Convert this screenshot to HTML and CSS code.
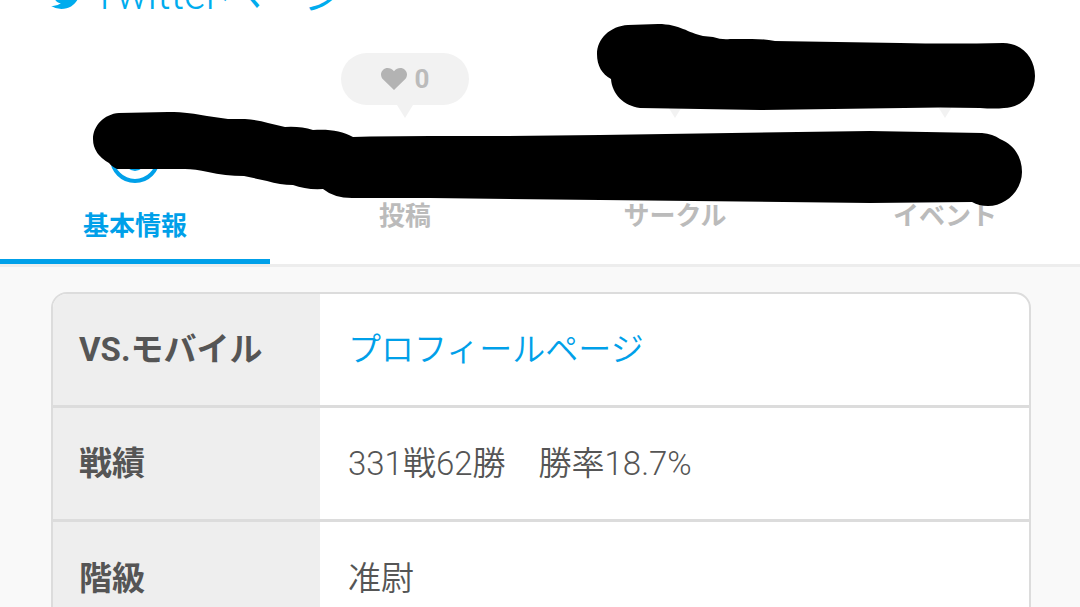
FILE: index.html
```html
<!DOCTYPE html>
<html lang="ja">
<head>
    <meta charset="UTF-8">
    <meta name="viewport" content="width=device-width, initial-scale=1.0">
    <title>プロフィール</title>
    <link rel="stylesheet" href="styles.css">
</head>
<body>
    <header class="header">
        <a href="#" class="twitter-link">
            <svg class="twitter-icon" viewBox="0 0 24 24" aria-hidden="true">
                <path d="M23.6 4.9c-.9.4-1.8.6-2.8.8 1-.6 1.8-1.6 2.1-2.7-.9.6-2 1-3.1 1.2a4.8 4.8 0 0 0-8.300 4.400C7.700 8.400 4.100 6.500 1.700 3.500a4.800 4.800 0 0 0 1.500 6.500c-.8 0-1.500-.2-2.200-.6v.1c0 2.300 1.700 4.300 3.900 4.700-.7.2-1.500.2-2.200.1.600 1.900 2.400 3.300 4.500 3.400A9.700 9.700 0 0 1 .1 19.600a13.700 13.700 0 0 0 7.400 2.200c8.900 0 13.700-7.400 13.700-13.800v-.6c1-.7 1.800-1.500 2.400-2.500z"/>
            </svg>
            <span><span class="latin">Twitter</span>ページ</span>
        </a>
    </header>

    <nav class="tabs">
        <a href="#" class="tab active">
            <svg class="tab-icon" viewBox="0 0 50 50" aria-hidden="true">
                <circle cx="25" cy="25" r="23"/>
                <circle class="fill" cx="25" cy="28" r="10"/>
            </svg>
            <span class="tab-label">基本情報</span>
        </a>
        <a href="#" class="tab">
            <span class="bubble">
                <svg class="heart" viewBox="0 0 26 22" aria-hidden="true">
                    <path d="M13 22L2.200 11.600C-.7 8.700-.7 4.300 2 1.900 4.900-.7 9.700-.6 13 3.200 16.300-.6 21.100-.7 24 1.900c2.700 2.400 2.700 6.800-.2 9.700z"/>
                </svg>
                <span>0</span>
            </span>
            <span class="tab-label">投稿</span>
        </a>
        <a href="#" class="tab">
            <span class="bubble"></span>
            <span class="tab-label">サークル</span>
        </a>
        <a href="#" class="tab">
            <span class="bubble"></span>
            <span class="tab-label">イベント</span>
        </a>
    </nav>

    <main class="content">
        <div class="info-box">
            <table class="info-table">
                <tr>
                    <th scope="row">VS.モバイル</th>
                    <td><a href="#">プロフィールページ</a></td>
                </tr>
                <tr>
                    <th scope="row">戦績</th>
                    <td><span class="latin">331</span>戦<span class="latin">62</span>勝　勝率<span class="latin">18.7%</span></td>
                </tr>
                <tr>
                    <th scope="row">階級</th>
                    <td>准尉</td>
                </tr>
            </table>
        </div>
    </main>

    <!-- hand-drawn marker strokes -->
    <svg class="marker" viewBox="0 0 1080 220" aria-hidden="true">
        <path d="M628 25L658 24C680 24 688 33 703 36L713 37Q722 40 730 39L752 39Q765 39 775 41L900 43Q950 44 1003 43C1022 43 1035 58 1035 76C1035 94 1021 108 1004 108Q995 109 980 108L940 107.500L760 110L640 108C624 106 612 94 611 79C602 74 597 66 597 54C597 39 610 26 628 25z"/>
        <path d="M119 113L168 112C185 112 195 114 207 116L228 119L245 119Q258 120 268 123L285 127Q300 126 313 130C330 129 342 131 353 137L370 136.500L430 136L500 136L600 135L870 131L982 133Q993 134 1000 139C1015 145 1022 158 1022 172C1022 190 1006 206 988 206Q979 206 972 202L870 203L600 200L430 198L352 198Q334 198 323 189Q306 190 293 185Q280 185 267 181L244 176Q225 176 208 172Q195 169 185 169L117 169Q111 166 109 163Q93 154 93 139C93 126 104 114 119 113z"/>
    </svg>
</body>
</html>
```
FILE: styles.css
```css
* {
    margin: 0;
    padding: 0;
    box-sizing: border-box;
}

body {
    position: relative;
    font-family: Roboto, 'Noto Sans CJK JP', sans-serif;
    font-weight: 350;
    color: #555;
    background: #f9f9f9;
}

a {
    color: #00a0e9;
    text-decoration: none;
}

.latin {
    font-weight: 300;
}

.header {
    display: flex;
    align-items: flex-end;
    height: 20px;
    padding: 0 51px;
    background: white;
    overflow: hidden;
}

.twitter-link {
    display: flex;
    align-items: center;
    gap: 8px;
    font-size: 42px;
    line-height: 50px;
    color: #00acee;
}

.twitter-icon {
    width: 33px;
    height: 33px;
    fill: #00acee;
}

.tabs {
    display: flex;
    height: 247px;
    background: white;
    border-bottom: 3px solid #ededed;
}

.tab {
    flex: 1;
    display: flex;
    flex-direction: column;
    align-items: center;
    justify-content: space-between;
    padding: 33px 0;
    color: #bbb;
}

.tab.active {
    justify-content: flex-end;
    gap: 28px;
    padding-bottom: 18px;
    border-bottom: 5px solid #00a0e9;
    color: #00a0e9;
}

.tab-label {
    font-size: 26px;
    font-weight: bold;
    line-height: 30px;
}

.tab-icon {
    width: 50px;
    height: 50px;
    fill: none;
    stroke: #00a0e9;
    stroke-width: 4;
}

.tab-icon .fill {
    fill: #00a0e9;
    stroke: none;
}

.bubble {
    position: relative;
    display: flex;
    align-items: center;
    justify-content: center;
    gap: 8px;
    width: 128px;
    height: 52px;
    border-radius: 26px;
    background: #f2f2f2;
    font-size: 26px;
    font-weight: bold;
}

.bubble::after {
    content: '';
    position: absolute;
    top: 100%;
    left: 50%;
    margin-left: -8px;
    border: 8px solid transparent;
    border-top: 13px solid #f2f2f2;
    border-bottom: 0;
}

.heart {
    width: 26px;
    height: 22px;
    fill: #b3b3b3;
}

.content {
    padding: 25px 49px 25px 51px;
}

.info-box {
    border: 2px solid #dcdcdc;
    border-radius: 16px;
    background: white;
    overflow: hidden;
}

.info-table {
    width: 100%;
    border-spacing: 0;
    font-size: 33px;
    line-height: 48px;
}

.info-table th,
.info-table td {
    height: 114px;
    border-bottom: 3px solid #dcdcdc;
    text-align: left;
}

.info-table tr:last-child th,
.info-table tr:last-child td {
    border-bottom: none;
}

.info-table th {
    width: 267px;
    padding-left: 26px;
    background: #eee;
    font-weight: bold;
}

.info-table td {
    padding-left: 28px;
}

.marker {
    position: absolute;
    top: 0;
    left: 0;
    width: 100%;
    pointer-events: none;
}
```
